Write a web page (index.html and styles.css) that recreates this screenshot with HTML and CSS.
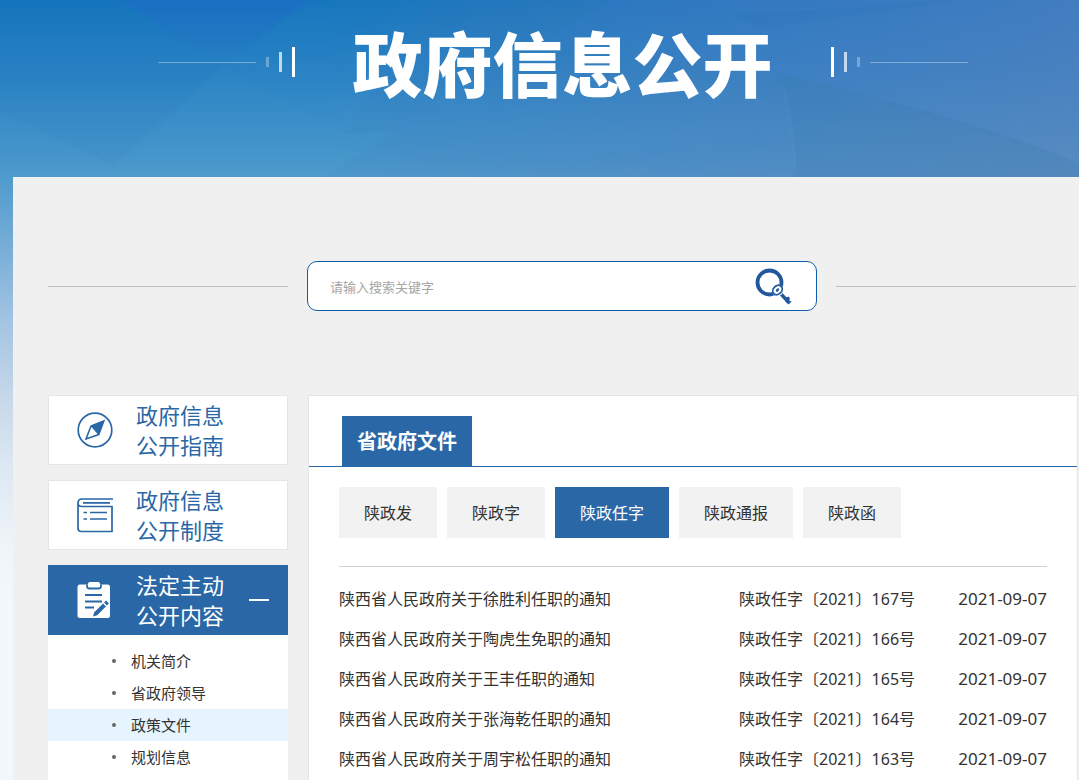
FILE: index.html
```html
<!DOCTYPE html>
<html lang="zh-CN">
<head>
<meta charset="utf-8">
<title>政府信息公开</title>
<link rel="stylesheet" href="styles.css">
</head>
<body>
<header class="banner">
  <svg class="banner-art" viewBox="0 0 1079 177" preserveAspectRatio="none" aria-hidden="true">
    <defs>
      <linearGradient id="side" x1="0" x2="1" y1="0" y2="0">
        <stop offset="0.3" stop-color="#5a82bd" stop-opacity="0"/>
        <stop offset="0.75" stop-color="#5a80bb" stop-opacity="0.42"/>
        <stop offset="1" stop-color="#5f84ba" stop-opacity="0.62"/>
      </linearGradient>
      <linearGradient id="violet" x1="0" x2="0" y1="0" y2="1">
        <stop offset="0" stop-color="#2065c8" stop-opacity="0.4"/>
        <stop offset="1" stop-color="#2065c8" stop-opacity="0.03"/>
      </linearGradient>
      <linearGradient id="fade" x1="0" x2="0" y1="0" y2="1">
        <stop offset="0" stop-color="#3c78cd" stop-opacity="0.25"/>
        <stop offset="1" stop-color="#3c78cd" stop-opacity="0"/>
      </linearGradient>
    </defs>
    <rect width="1079" height="177" fill="url(#side)"/>
    <polygon points="120,0 310,0 222,66" fill="url(#violet)"/>
    <polygon points="0,112 114,165 222,66 120,0 0,0" fill="#1968b4" fill-opacity="0.05"/>
    <polygon points="222,66 345,134 400,134 322,177 110,177" fill="#5ab4dc" fill-opacity="0.03"/>
    <polygon points="322,177 400,130 345,134 365,100 430,0 610,0 540,45 780,74 796,177" fill="#4678b4" fill-opacity="0.07"/>
    <polygon points="610,0 1079,0 1079,162 780,74 540,45" fill="url(#fade)"/>
    <path d="M780 74 L860 93 Q1000 130 1079 163 V177 H796 Q797 120 780 74Z" fill="#286e9b" fill-opacity="0.12"/>
    <polygon points="735,15 960,0 760,28" fill="#196eaa" fill-opacity="0.1"/>
  </svg>
  <div class="banner-row">
    <span class="deco"><i class="rule"></i><i class="bar bar-s"></i><i class="bar bar-m"></i><i class="bar bar-l"></i></span>
    <h1 class="banner-title">政府信息公开</h1>
    <span class="deco"><i class="bar bar-l"></i><i class="bar bar-m"></i><i class="bar bar-s"></i><i class="rule"></i></span>
  </div>
</header>

<div class="page">
  <form class="search">
    <span class="search-line"></span>
    <div class="search-box">
      <input class="search-input" type="text" placeholder="请输入搜索关键字" aria-label="搜索关键字">
      <button class="search-btn" type="button" aria-label="搜索">
        <svg width="38" height="38" viewBox="0 0 38 38" fill="none">
          <circle cx="15.500" cy="15.500" r="12" stroke="#22579d" stroke-width="3.800"/>
          <path d="M26 26 L34.500 35" stroke="#22579d" stroke-width="3.400"/>
          <path d="M32 30.500 L34.500 29.500 L36 31.500 L35 33.500 L37.500 34.500 L34.500 37.500 L31 34Z" fill="#22579d"/>
          <circle cx="23.500" cy="23" r="6" fill="#fff"/>
          <ellipse cx="23.500" cy="23" rx="5.200" ry="4.200" transform="rotate(-45 23.500 23)" stroke="#22579d" stroke-width="1.800"/>
          <ellipse cx="23.500" cy="23" rx="2" ry="1.300" transform="rotate(-45 23.500 23)" fill="#22579d"/>
        </svg>
      </button>
    </div>
    <span class="search-line"></span>
  </form>

  <div class="columns">
    <nav class="side">
      <a class="side-card" href="#">
        <svg class="side-icon" viewBox="0 0 36 36" fill="none" stroke="#2967a7">
          <circle cx="18" cy="18" r="16.800" stroke-width="1.700"/>
          <path d="M26.800 9 L14 14 L9 27 L21.700 22.600Z" stroke-width="1.600"/>
          <path d="M26.800 9 L14 14 L21.700 22.600Z" fill="#2967a7"/>
        </svg>
        <span class="side-text">政府信息<br>公开指南</span>
      </a>
      <a class="side-card" href="#">
        <svg class="side-icon" viewBox="0 0 36 36" fill="none" stroke="#2967a7" stroke-width="1.700">
          <path d="M36 2 H5 Q1 2 1 6 V31 Q1 34.500 4.500 34.500 H35 V9.500 H5 Q1 9.500 1 6"/>
          <path d="M6 5.800 H33 M6.500 15.500 H10 M13 15.500 H30 M6.500 22 H10 M13 22 H30"/>
        </svg>
        <span class="side-text">政府信息<br>公开制度</span>
      </a>
      <div class="side-group">
        <a class="side-card side-card-on" href="#">
          <svg class="side-icon" viewBox="0 0 36 36" fill="none">
            <rect x="0.500" y="2.500" width="32.500" height="33.500" rx="2.500" fill="#fff"/>
            <path d="M10 2.500 V4 Q10 6.500 12.500 6.500 H21.500 Q24 6.500 24 4 V2.500" stroke="#2967a7" stroke-width="1.800"/>
            <rect x="11" y="0" width="12" height="5" rx="2" fill="#fff"/>
            <path d="M8 13 H25 M8 19.500 H25 M8 25.500 H17" stroke="#2967a7" stroke-width="2"/>
            <path d="M18 32.500 L28 22" stroke="#fff" stroke-width="5.500"/>
            <path d="M19 31.500 L27.500 23 M28.500 22 L30.500 20" stroke="#2967a7" stroke-width="4"/>
            <path d="M16 34.500 L17.500 29.500 L21 33Z" fill="#2967a7"/>
          </svg>
          <span class="side-text">法定主动<br>公开内容</span>
          <span class="side-minus"></span>
        </a>
        <ul class="sub">
          <li><a href="#">机关简介</a></li>
          <li><a href="#">省政府领导</a></li>
          <li class="sub-on"><a href="#">政策文件</a></li>
          <li><a href="#">规划信息</a></li>
        </ul>
      </div>
    </nav>

    <main class="panel">
      <div class="panel-head"><h2 class="panel-title">省政府文件</h2></div>
      <div class="panel-body">
        <div class="tabs">
          <button class="tab" type="button">陕政发</button>
          <button class="tab" type="button">陕政字</button>
          <button class="tab tab-on" type="button">陕政任字</button>
          <button class="tab" type="button">陕政通报</button>
          <button class="tab" type="button">陕政函</button>
        </div>
        <div class="docs-wrap">
          <table class="docs">
            <tbody>
              <tr><td><a href="#">陕西省人民政府关于徐胜利任职的通知</a></td><td class="num">陕政任字〔2021〕167号</td><td class="date">2021-09-07</td></tr>
              <tr><td><a href="#">陕西省人民政府关于陶虎生免职的通知</a></td><td class="num">陕政任字〔2021〕166号</td><td class="date">2021-09-07</td></tr>
              <tr><td><a href="#">陕西省人民政府关于王丰任职的通知</a></td><td class="num">陕政任字〔2021〕165号</td><td class="date">2021-09-07</td></tr>
              <tr><td><a href="#">陕西省人民政府关于张海乾任职的通知</a></td><td class="num">陕政任字〔2021〕164号</td><td class="date">2021-09-07</td></tr>
              <tr><td><a href="#">陕西省人民政府关于周宇松任职的通知</a></td><td class="num">陕政任字〔2021〕163号</td><td class="date">2021-09-07</td></tr>
            </tbody>
          </table>
        </div>
      </div>
    </main>
  </div>
</div>
</body>
</html>
```

FILE: styles.css
```css
* {
  box-sizing: border-box;
}

body {
  margin: 0;
  min-height: 100vh;
  display: flex;
  flex-direction: column;
  font-family: "Noto Sans", "Noto Sans CJK SC", sans-serif;
  font-size: 16px;
  color: #333;
  background: linear-gradient(#1676bd 0, #2a83c4 75px, #4897cb 165px, #6aa7d4 225px, #a5c5e3 325px, #c5d7ea 395px, #dce7f2 465px, #eef4f9 545px, #f3f8fc 600px) no-repeat #f3f8fc;
  background-size: 100% 780px;
  overflow-x: hidden;
}

a {
  color: inherit;
  text-decoration: none;
}

/* Banner */
.banner {
  position: relative;
  height: 177px;
  padding-left: 46px;
}

.banner-art {
  position: absolute;
  inset: 0;
  width: 100%;
  height: 100%;
}

.banner-row {
  position: relative;
  display: flex;
  justify-content: center;
  gap: 58px;
  padding-top: 22px;
}

.banner-title {
  margin: 0;
  font-family: "Noto Sans CJK SC", sans-serif;
  font-size: 70px;
  line-height: 80px;
  font-weight: 900;
  color: #fff;
  white-space: nowrap;
}

.deco {
  display: flex;
  align-items: center;
  gap: 10px;
  height: 80px;
}

.rule {
  width: 98px;
  height: 1px;
  background: rgba(255, 255, 255, 0.35);
}

.bar {
  width: 3px;
  background: #fff;
}

.bar-s {
  height: 10px;
  opacity: 0.3;
}

.bar-m {
  height: 20px;
  opacity: 0.7;
}

.bar-l {
  height: 30px;
}

/* Page body */
.page {
  flex: 1;
  display: flex;
  flex-direction: column;
  margin-left: 13px;
  padding: 84px 1px 0 35px;
  background: #f0f0f0;
}

.search {
  display: flex;
  align-items: center;
  gap: 19px;
  padding-right: 2px;
}

.search-line {
  flex: 1;
  height: 1px;
  background: #bfbfbf;
}

.search-box {
  display: flex;
  align-items: center;
  width: 510px;
  height: 50px;
  padding: 0 24px 0 22px;
  border: 1px solid #0f5cab;
  border-radius: 10px;
  background: #fff;
}

.search-input {
  flex: 1;
  height: 40px;
  padding: 0;
  border: 0;
  outline: 0;
  background: none;
  font: 13px "Noto Sans CJK SC", sans-serif;
  color: #333;
}

.search-input::placeholder {
  color: #a6a6a6;
}

.search-btn {
  display: flex;
  padding: 0;
  border: 0;
  background: none;
}

.columns {
  flex: 1;
  display: flex;
  gap: 20px;
  margin-top: 84px;
}

/* Side navigation */
.side {
  display: flex;
  flex-direction: column;
  gap: 15px;
  width: 240px;
}

.side-card {
  display: flex;
  align-items: center;
  height: 70px;
  padding: 0 18px 0 28px;
  border: 1px solid #e5e5e5;
  background: #fff;
  color: #2967a7;
}

.side-card-on {
  border-color: #2967a7;
  background: #2967a7;
  color: #fff;
}

.side-icon {
  width: 36px;
  height: 36px;
  margin-right: 23px;
}

.side-text {
  font-size: 22px;
  line-height: 30px;
}

.side-minus {
  width: 20px;
  height: 2px;
  margin-left: auto;
  background: #fff;
}

.side-group {
  flex: 1;
  background: #fff;
}

.sub {
  margin: 0;
  padding: 10px 0 0;
  list-style: none;
  font-size: 15px;
  line-height: 32px;
}

.sub a {
  display: flex;
  align-items: center;
  gap: 15px;
  padding-left: 64px;
}

.sub a::before {
  content: "";
  width: 4px;
  height: 4px;
  border-radius: 50%;
  background: #666;
}

.sub-on {
  background: #e6f4fe;
}

/* Document panel */
.panel {
  flex: 1;
  border: 1px solid #e5e5e5;
  border-bottom: 0;
  background: #fff;
}

.panel-head {
  display: flex;
  padding: 20px 33px 0;
  border-bottom: 1px solid #2967a7;
}

.panel-title {
  margin: 0;
  padding: 2px 15px 0;
  background: #2967a7;
  color: #fff;
  font-size: 20px;
  line-height: 48px;
}

.panel-body {
  padding: 20px 30px 0;
}

.tabs {
  display: flex;
  gap: 10px;
}

.tab {
  height: 51px;
  padding: 0 25px 2px;
  border: 0;
  background: #f2f2f2;
  color: #333;
  font: 16px "Noto Sans CJK SC", sans-serif;
}

.tab-on {
  background: #2967a7;
  color: #fff;
}

.docs-wrap {
  margin-top: 28px;
  padding-top: 12px;
  border-top: 1px solid #d1d1d1;
}

.docs {
  width: 100%;
  border-collapse: collapse;
}

.docs td {
  height: 40px;
  padding: 0 0 2px;
  white-space: nowrap;
}

.docs .num {
  width: 200px;
}

.docs .date {
  width: 108px;
  text-align: right;
  font-size: 17px;
}
```
